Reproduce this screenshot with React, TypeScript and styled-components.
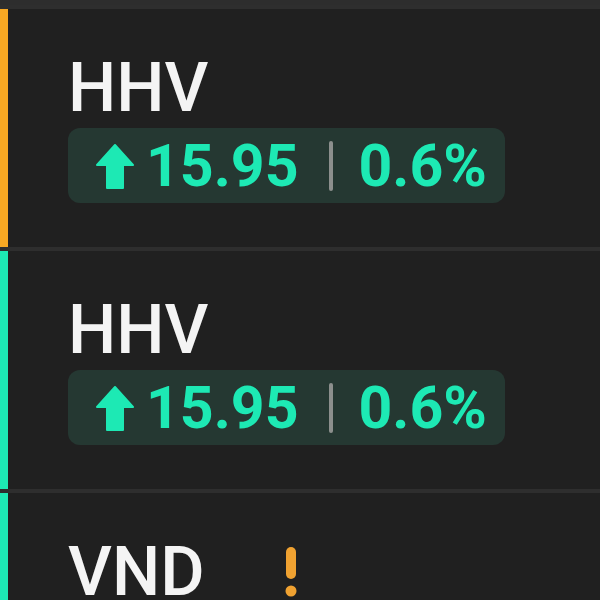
import styled, { createGlobalStyle } from "styled-components";

const GlobalStyle = createGlobalStyle`
  html, body {
    margin: 0;
    padding: 0;
    background: #202020;
  }
  body {
    font-family: Roboto, "Liberation Sans", sans-serif;
    overflow: hidden;
  }
`;

type Quote = {
  ticker: string;
  accent: string;
  value?: string;
  percent?: string;
  warning?: boolean;
};

const quotes: Quote[] = [
  { ticker: "HHV", accent: "#f7a823", value: "15.95", percent: "0.6%" },
  { ticker: "HHV", accent: "#1de9b4", value: "15.95", percent: "0.6%" },
  { ticker: "VND", accent: "#1de9b4", warning: true },
];

const UpArrow = () => (
  <svg width="38" height="45" viewBox="0 0 38 45">
    <path
      d="M19 1 L37 21 L27 21 L27 44 L11 44 L11 21 L1 21 Z"
      fill="#1de9b4"
      stroke="#1de9b4"
      strokeWidth="2"
      strokeLinejoin="round"
    />
  </svg>
);

const WarningIcon = () => (
  <svg width="12" height="56" viewBox="0 0 12 56">
    <rect x="1" y="0" width="10" height="32" rx="5" fill="#f0a231" />
    <circle cx="6" cy="44" r="5.5" fill="#f0a231" />
  </svg>
);

const App = () => {
  return (
    <Page>
      <GlobalStyle />
      <TopBand />
      {quotes.map((q, i) => (
        <Card key={i} accent={q.accent}>
          <TickerRow>
            <Ticker>{q.ticker}</Ticker>
            {q.warning && (
              <Warning>
                <WarningIcon />
              </Warning>
            )}
          </TickerRow>
          {q.value && (
            <Pill>
              <UpArrow />
              <Value>{q.value}</Value>
              <Separator />
              <Value>{q.percent}</Value>
            </Pill>
          )}
        </Card>
      ))}
    </Page>
  );
};

export default App;

const Page = styled.div`
  width: 600px;
  height: 600px;
  display: flex;
  flex-direction: column;
  gap: 4px;
  background: #2e2e2e;
  overflow: hidden;
`;

const TopBand = styled.div`
  height: 5px;
  flex: none;
  background: #2d2d2d;
`;

const Card = styled.div<{ accent: string }>`
  flex: none;
  height: 238px;
  box-sizing: border-box;
  padding: 45px 0 0 60px;
  background: #202020;
  border-left: 8px solid ${(p) => p.accent};
  display: flex;
  flex-direction: column;
  align-items: flex-start;
`;

const TickerRow = styled.div`
  display: flex;
  align-items: flex-start;
`;

const Ticker = styled.div`
  font-size: 68px;
  font-weight: 500;
  line-height: 1;
  color: #f4f4f4;
`;

const Warning = styled.div`
  display: flex;
  margin-left: 80px;
  padding-top: 9px;
`;

const Pill = styled.div`
  margin-top: 6px;
  height: 75px;
  box-sizing: border-box;
  padding: 0 18px 0 28px;
  display: flex;
  align-items: center;
  background: #253832;
  border-radius: 12px;
  svg {
    margin-right: 12px;
    margin-top: 2px;
  }
`;

const Value = styled.span`
  font-size: 59px;
  font-weight: 700;
  line-height: 1;
  color: #1de9b4;
`;

const Separator = styled.div`
  width: 4px;
  height: 50px;
  border-radius: 2px;
  background: #8c8f8d;
  margin: 0 26px 0 30px;
`;
